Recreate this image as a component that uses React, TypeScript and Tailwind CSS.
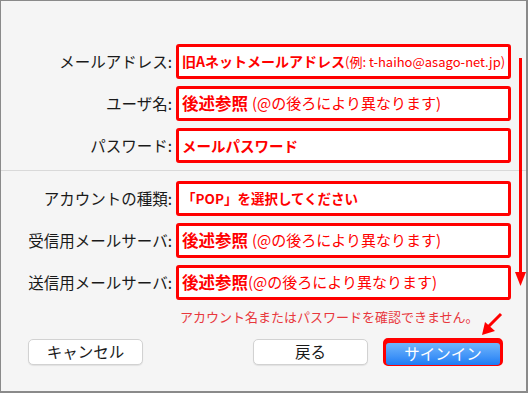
const FONT = "font-['Noto_Sans_CJK_JP','Noto_Sans',sans-serif]";

const NOTE = "(@の後ろにより異なります)";

function Row({ label, children }: { label: string; children: React.ReactNode }) {
  return (
    <div className="flex h-[35px] items-center">
      <div className="w-[175px] pr-[4px] text-right text-[15.5px] leading-none text-[#1a1a1a]">{label}</div>
      <div className="flex h-[35px] w-[335px] items-center overflow-hidden whitespace-nowrap rounded-[3px] border-[3px] border-[#ff0000] bg-white pl-[3px] text-[#ff0000]">
        {children}
      </div>
    </div>
  );
}

function Arrows() {
  return (
    <svg className="pointer-events-none absolute left-0 top-0" width="528" height="393" viewBox="0 0 528 393">
      {/* vertical guide down the right side */}
      <line x1="519.5" y1="57" x2="519.5" y2="273" stroke="#ff0000" strokeWidth="3" />
      <polygon points="514,271 525,271 519.5,285" fill="#ff0000" />
      {/* pointer to the sign-in button */}
      <line x1="500" y1="313" x2="487" y2="326" stroke="#ff0000" strokeWidth="3" />
      <polygon points="481,334 484,321 494,330" fill="#ff0000" />
    </svg>
  );
}

export default function App() {
  return (
    <div className={`relative h-[393px] w-[528px] overflow-hidden border border-r-2 border-b-2 border-[#8a8a8a] bg-[#f5f5f5] ${FONT}`}>
      <div className="flex flex-col gap-[7px] pt-[43px]">
        <Row label="メールアドレス:">
          <span className="text-[14px] font-bold">旧Aネットメールアドレス</span>
          <span className="text-[13px]">(例: t-haiho@asago-net.jp)</span>
        </Row>
        <Row label="ユーザ名:">
          <span className="text-[16.5px] font-bold">後述参照</span>
          <span className="ml-[4px] text-[15px]">{NOTE}</span>
        </Row>
        <Row label="パスワード:">
          <span className="text-[14.5px] font-bold">メールパスワード</span>
        </Row>
      </div>

      <div className="mt-[7px] h-px bg-[#d9d9d9]" />

      <div className="mt-[10px] flex flex-col gap-[7px]">
        <Row label="アカウントの種類:">
          <span className="text-[13.5px] font-bold">「POP」を選択してください</span>
        </Row>
        <Row label="受信用メールサーバ:">
          <span className="text-[16.5px] font-bold">後述参照</span>
          <span className="ml-[4px] text-[15px]">{NOTE}</span>
        </Row>
        <Row label="送信用メールサーバ:">
          <span className="text-[16.5px] font-bold">後述参照</span>
          <span className="text-[15px]">{NOTE}</span>
        </Row>
      </div>

      <p className="mt-[8px] pl-[179px] text-[13px] leading-[18px] text-[#e8383d]">
        アカウント名またはパスワードを確認できません。
      </p>

      <div className="mt-[12px] flex items-center pl-[27px]">
        <button className="h-[26px] w-[115px] rounded-[5px] border border-[#d2d2d2] bg-white text-[15.5px] leading-none text-[#1a1a1a] shadow-[0_1px_1px_rgba(0,0,0,0.08)]">
          キャンセル
        </button>
        <button className="ml-[110px] h-[26px] w-[115px] rounded-[5px] border border-[#d2d2d2] bg-white text-[15.5px] leading-none text-[#1a1a1a] shadow-[0_1px_1px_rgba(0,0,0,0.08)]">
          戻る
        </button>
        <div className="ml-[15px] h-[28px] w-[120px] rounded-[5px] border-[3px] border-[#ff0000] bg-[#ff0000]">
          <button className="h-full w-full rounded-[3px] bg-gradient-to-b from-[#70b6fb] to-[#1b7cf4] text-[15.5px] leading-none text-white">
            サインイン
          </button>
        </div>
      </div>

      <Arrows />
    </div>
  );
}
